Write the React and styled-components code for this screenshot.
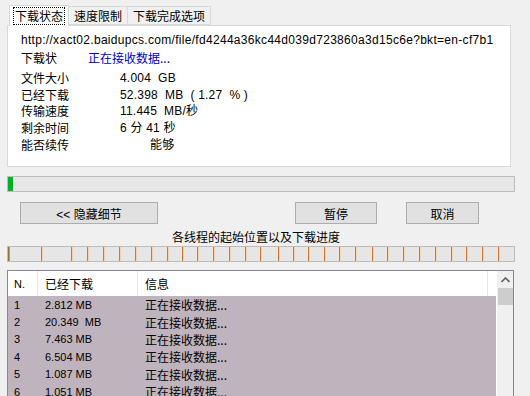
import React from "react";
import styled, { createGlobalStyle } from "styled-components";

const Global = createGlobalStyle`
  html, body { margin: 0; padding: 0; background: #f0f0f0; }
  body { font-family: "Liberation Sans", "Noto Sans CJK SC", sans-serif; font-size: 12px; color: #000; }
`;

const Window = styled.div`
  width: 530px;
  height: 396px;
  overflow: hidden;
  background: #f0f0f0;
  display: flex;
  flex-direction: column;
`;

const TabArea = styled.div`
  margin: 5px 0 0 7px;
  width: 504px;
  display: flex;
  flex-direction: column;
  flex-shrink: 0;
`;

const TabStrip = styled.div`
  display: flex;
  align-items: flex-end;
  height: 20px;
  padding-left: 2px;
`;

const Tab = styled.div`
  box-sizing: border-box;
  height: ${(p) => (p.$active ? "21px" : "19px")};
  margin-bottom: ${(p) => (p.$active ? "-1px" : "0")};
  padding: 0 ${(p) => (p.$active ? "4px" : "5px")};
  margin-left: ${(p) => (p.$first ? "0" : "-1px")};
  background: ${(p) => (p.$active ? "#fff" : "#f0f0f0")};
  border: 1px solid #d9d9d9;
  border-bottom: ${(p) => (p.$active ? "none" : "1px solid #d9d9d9")};
  display: flex;
  align-items: center;
  font-family: "Noto Sans CJK SC", sans-serif;
  font-size: 12px;
  position: relative;
  z-index: ${(p) => (p.$active ? 2 : 1)};
`;

const Focus = styled.span`
  outline: 1px dotted #000;
  outline-offset: 0;
  padding: 0 1px;
  line-height: 16px;
`;

const Panel = styled.div`
  box-sizing: border-box;
  height: 142px;
  background: #fff;
  border: 1px solid #d9d9d9;
  padding: 6px 13px 0 13px;
  position: relative;
  z-index: 1;
`;

const UrlLine = styled.div`
  font-family: "Liberation Sans", sans-serif;
  font-size: 12px;
  letter-spacing: 0.3px;
  line-height: 17px;
  height: 17px;
  white-space: nowrap;
`;

const StatusLine = styled.div`
  display: flex;
  height: 17px;
  line-height: 17px;
  margin-bottom: 4px;
  font-family: "Noto Sans CJK SC", sans-serif;
`;

const StatusLabel = styled.span`
  width: 67px;
`;

const StatusValue = styled.span`
  color: #0000c8;
`;

const InfoGrid = styled.div`
  display: grid;
  grid-template-columns: 99px auto;
  grid-auto-rows: 16.6px;
  align-items: center;
`;

const Label = styled.span`
  font-family: "Noto Sans CJK SC", sans-serif;
  font-size: 12px;
  line-height: 16px;
`;

const Value = styled.span`
  font-family: "Liberation Sans", "Noto Sans CJK SC", sans-serif;
  font-size: 12px;
  letter-spacing: 0.2px;
  line-height: 16px;
  white-space: pre;
  padding-left: ${(p) => p.$indent || 0}px;
`;

const Progress = styled.div`
  box-sizing: border-box;
  flex-shrink: 0;
  margin: 9px 0 0 7px;
  width: 508px;
  height: 16px;
  border: 1px solid #bcbcbc;
  background: #e6e6e6;
  display: flex;
`;

const Fill = styled.div`
  height: 100%;
  background: #06b025;
`;

const ButtonRow = styled.div`
  display: flex;
  flex-shrink: 0;
  margin: 10px 0 0 20px;
  height: 22px;
`;

const Button = styled.div`
  box-sizing: border-box;
  width: ${(p) => p.$w}px;
  margin-left: ${(p) => p.$ml || 0}px;
  height: 22px;
  border: 1px solid #adadad;
  background: #e1e1e1;
  display: flex;
  align-items: center;
  justify-content: center;
  font-family: "Liberation Sans", "Noto Sans CJK SC", sans-serif;
  font-size: 12px;
`;

const Caption = styled.div`
  flex-shrink: 0;
  text-align: center;
  width: 512px;
  margin-top: 3px;
  height: 19px;
  line-height: 19px;
  font-family: "Noto Sans CJK SC", sans-serif;
  font-size: 12px;
`;

const ThreadBar = styled.div`
  box-sizing: border-box;
  flex-shrink: 0;
  margin: 0 0 0 7px;
  width: 508px;
  height: 16px;
  border: 1px solid #bcbcbc;
  background: #e6e6e6;
  position: relative;
`;

const Tick = styled.div`
  position: absolute;
  top: 0;
  bottom: 0;
  width: 1px;
  background: ${(p) => (p.$start ? "#8a7a30" : "#d8782e")};
  box-shadow: ${(p) => (p.$start ? "1px 0 0 #b8a24a" : "1px 0 0 #f6cfa8")};
`;

const List = styled.div`
  box-sizing: border-box;
  margin: 8px 0 0 7px;
  width: 507px;
  flex: 1;
  min-height: 0;
  border: 1px solid #828790;
  border-bottom: none;
  background: #fff;
  display: flex;
  overflow: hidden;
`;

const ListBody = styled.div`
  flex: 1;
  min-height: 0;
  display: flex;
  flex-direction: column;
`;

const Header = styled.div`
  flex-shrink: 0;
  display: grid;
  grid-template-columns: 30px 100px 350px 1fr;
  height: 25px;
  background: #fff;
`;

const HeadCell = styled.div`
  display: flex;
  align-items: center;
  padding-left: ${(p) => p.$pl || 7}px;
  border-right: ${(p) => (p.$noline ? "none" : "1px solid #e5e5e5")};
  font-family: ${(p) => (p.$latin ? '"Liberation Sans", sans-serif' : '"Noto Sans CJK SC", sans-serif')};
  font-size: ${(p) => (p.$latin ? "11px" : "12px")};
`;

const Rows = styled.div`
  flex: 1 0 auto;
  background: #bfb4bd;
`;

const Row = styled.div`
  display: grid;
  grid-template-columns: 30px 100px 1fr;
  height: 17.4px;
  align-items: center;
`;

const NumCell = styled.span`
  padding-left: 6px;
  font-family: "Liberation Sans", sans-serif;
  font-size: 11px;
`;

const SizeCell = styled.span`
  padding-left: 7px;
  font-family: "Liberation Sans", sans-serif;
  font-size: 11px;
  white-space: pre;
`;

const InfoCell = styled.span`
  padding-left: 7px;
  font-family: "Noto Sans CJK SC", sans-serif;
  font-size: 12px;
`;

const Scrollbar = styled.div`
  width: 16px;
  margin-left: 1px;
  background: #f0f0f0;
  display: flex;
  flex-direction: column;
  align-items: center;
`;

const Arrow = styled.div`
  height: 17px;
  display: flex;
  align-items: center;
  justify-content: center;
`;

const Thumb = styled.div`
  width: 15px;
  height: 17px;
  background: #cdcdcd;
`;

const ticks = [41, 71, 87, 103, 119, 135, 151, 167, 182, 197, 213, 229, 245, 260, 278, 293, 308, 324, 339, 355, 372, 387, 403, 419, 435, 451, 466, 482, 498];

const rows = [
  ["1", "2.812 MB"],
  ["2", "20.349  MB"],
  ["3", "7.463 MB"],
  ["4", "6.504 MB"],
  ["5", "1.087 MB"],
  ["6", "1.051 MB"],
];

export default function App() {
  return (
    <>
      <Global />
      <Window>
        <TabArea>
          <TabStrip>
            <Tab $active $first>
              <Focus>下载状态</Focus>
            </Tab>
            <Tab>速度限制</Tab>
            <Tab>下载完成选项</Tab>
          </TabStrip>
          <Panel>
            <UrlLine>http://xact02.baidupcs.com/file/fd4244a36kc44d039d723860a3d15c6e?bkt=en-cf7b1</UrlLine>
            <StatusLine>
              <StatusLabel>下载状</StatusLabel>
              <StatusValue>正在接收数据...</StatusValue>
            </StatusLine>
            <InfoGrid>
              <Label>文件大小</Label>
              <Value>4.004  GB</Value>
              <Label>已经下载</Label>
              <Value>52.398  MB  ( 1.27  % )</Value>
              <Label>传输速度</Label>
              <Value>11.445  MB/秒</Value>
              <Label>剩余时间</Label>
              <Value>6 分 41 秒</Value>
              <Label>能否续传</Label>
              <Value $indent={30}>能够</Value>
            </InfoGrid>
          </Panel>
        </TabArea>
        <Progress>
          <Fill style={{ width: "5px" }} />
        </Progress>
        <ButtonRow>
          <Button $w={138}>&lt;&lt; 隐藏细节</Button>
          <Button $w={82} $ml={137}>暂停</Button>
          <Button $w={73} $ml={29}>取消</Button>
        </ButtonRow>
        <Caption>各线程的起始位置以及下载进度</Caption>
        <ThreadBar>
          <Tick $start style={{ left: "0px" }} />
          {ticks.map((x) => (
            <Tick key={x} style={{ left: `${x - 8}px` }} />
          ))}
        </ThreadBar>
        <List>
          <ListBody>
            <Header>
              <HeadCell $latin $pl={6}>N.</HeadCell>
              <HeadCell>已经下载</HeadCell>
              <HeadCell>信息</HeadCell>
              <HeadCell $noline />
            </Header>
            <Rows>
              {rows.map(([n, s]) => (
                <Row key={n}>
                  <NumCell>{n}</NumCell>
                  <SizeCell>{s}</SizeCell>
                  <InfoCell>正在接收数据...</InfoCell>
                </Row>
              ))}
            </Rows>
          </ListBody>
          <Scrollbar>
            <Arrow>
              <svg width="9" height="6" viewBox="0 0 9 6">
                <path d="M0.5 5 L4.5 1 L8.5 5" stroke="#606060" strokeWidth="1.6" fill="none" />
              </svg>
            </Arrow>
            <Thumb />
          </Scrollbar>
        </List>
      </Window>
    </>
  );
}
